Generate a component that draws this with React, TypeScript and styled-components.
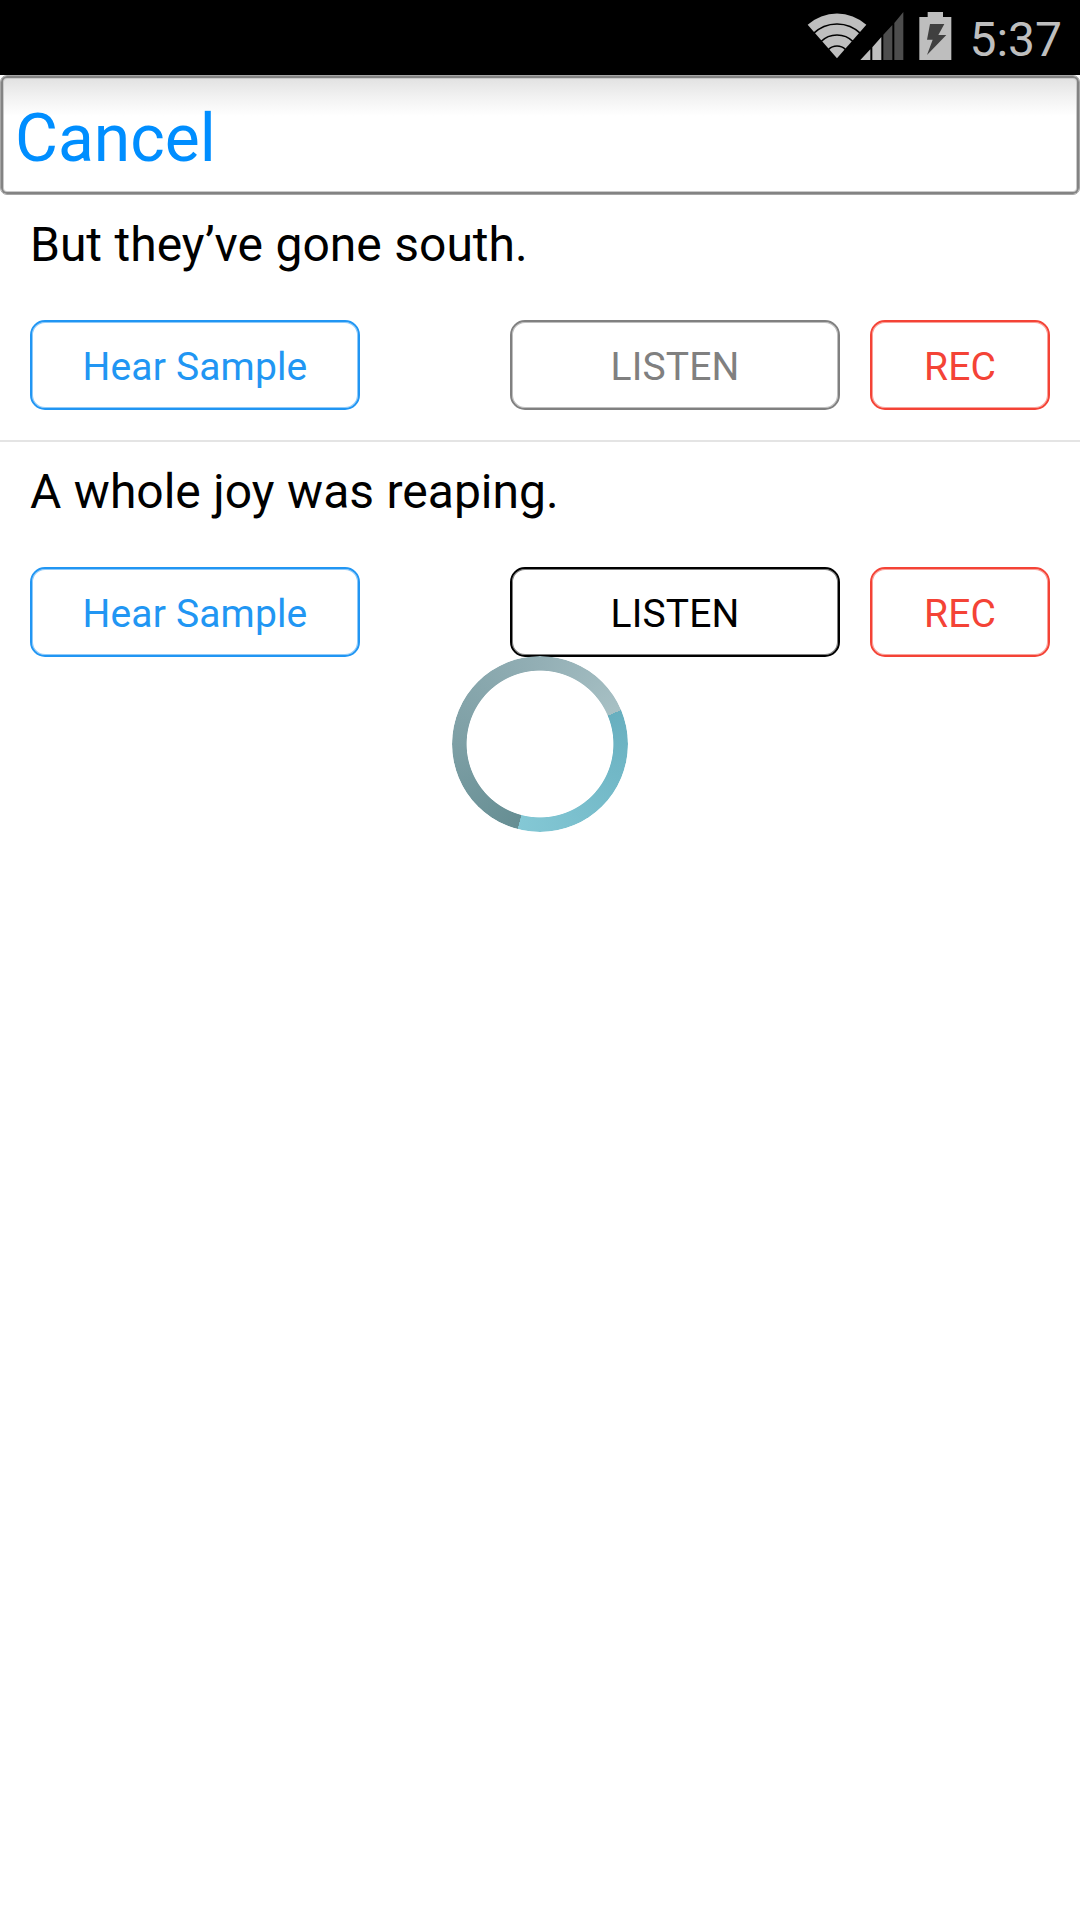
import React from 'react';
import styled, { createGlobalStyle } from 'styled-components';

const GlobalStyle = createGlobalStyle`
  *, *::before, *::after { box-sizing: border-box; }
  html, body { margin: 0; padding: 0; background: #fff; }
  button { font: inherit; }
`;

const Screen = styled.div`
  position: relative;
  display: flex;
  flex-direction: column;
  width: 1080px;
  height: 1920px;
  overflow: hidden;
  background: #fff;
  font-family: Roboto, 'Noto Sans', sans-serif;
  color: #000;
`;

const StatusBar = styled.header`
  display: flex;
  flex: none;
  justify-content: flex-end;
  height: 75px;
  padding-right: 18px;
  background: #000;
`;

const StatusIcons = styled.svg`
  display: block;
  flex: none;
  width: 164px;
  height: 75px;
  margin-right: -1px;
`;

const Clock = styled.time`
  font-size: 48px;
  line-height: 80px;
  color: #bebebe;
`;

const NavBar = styled.nav`
  display: flex;
  flex: none;
  align-items: center;
  height: 120px;
  padding: 0 14px;
  border: 1px solid #a6a6a6;
  border-radius: 7px;
  box-shadow: inset 0 0 0 2px #838383, inset 0 0 0 3px #cacaca;
  background: linear-gradient(#e0e0e0 0, #f1f1f1 20px, #fff 40px);
`;

const CancelButton = styled.button`
  padding: 7px 0 0;
  border: 0;
  background: none;
  font-size: 66px;
  line-height: 76px;
  color: #008eff;
`;

const PhraseList = styled.ul`
  margin: 0;
  padding: 0;
  list-style: none;
`;

const PhraseItem = styled.li`
  display: flex;
  flex-direction: column;
  height: 247px;
  padding: 21px 30px 0;

  &:not(:last-child) {
    border-bottom: 2px solid #e4e4e4;
  }
`;

const PhraseText = styled.p`
  margin: 0;
  height: 104px;
  font-size: 48px;
  line-height: 58px;
  word-spacing: 0.6px;
  white-space: nowrap;
`;

const Actions = styled.div`
  display: flex;
  gap: 30px;
`;

const ActionButton = styled.button<{ $color: string; $width: number; $end?: boolean }>`
  width: ${({ $width }) => $width}px;
  height: 90px;
  margin-left: ${({ $end }) => ($end ? 'auto' : '0')};
  padding: 4px 0 0;
  border: 2px solid ${({ $color }) => $color};
  border-radius: 15px;
  box-shadow: inset 0 0 0 1px ${({ $color }) => $color}80;
  background: #fff;
  font-size: 39px;
  line-height: 46px;
  letter-spacing: 0.15px;
  color: ${({ $color }) => $color};
`;

const Spinner = styled.div`
  position: absolute;
  top: 656px;
  left: 452px;
  width: 176px;
  height: 176px;
  border-radius: 50%;
  background: conic-gradient(
    from 67.3deg,
    #68afbf 0deg,
    #84c8d5 127.3deg,
    #668e93 127.5deg,
    #7d9fa5 203deg,
    #93afb5 293deg,
    #a7c0c4 360deg
  );
  mask: radial-gradient(circle closest-side, transparent 73px, #000 73.8px);
`;

const phrases = [
  { text: 'But they’ve gone south.', listenColor: '#808080' },
  { text: 'A whole joy was reaping.', listenColor: '#000000' },
];

export default function App() {
  return (
    <Screen>
      <GlobalStyle />
      <StatusBar>
        <StatusIcons viewBox="0 0 492 225" aria-hidden="true">
          <path fill="#bebebe" d="M93 175 L5 74 A133 133 0 0 1 181 74 Z" />
          <g fill="none" stroke="#000" strokeWidth="5">
            <circle cx="93" cy="174" r="102" />
            <circle cx="93" cy="174" r="69" />
            <circle cx="93" cy="174" r="36" />
          </g>
          <path fill="#bebebe" d="M163 180 L193 148 V180 Z M199 142 L226 111 V180 H199 Z" />
          <path fill="#4d4d4d" d="M232 104 L259 75 V180 H232 Z M265 69 L292 36 V180 H265 Z" />
          <path fill="#bebebe" d="M340 51 H365 V36 H411 V51 H436 V180 H340 Z" />
          <path fill="#404040" d="M372 72 H415 L397 105 H421 L363 165 L380 119 H363 Z" />
        </StatusIcons>
        <Clock>5:37</Clock>
      </StatusBar>
      <NavBar>
        <CancelButton>Cancel</CancelButton>
      </NavBar>
      <PhraseList>
        {phrases.map(({ text, listenColor }) => (
          <PhraseItem key={text}>
            <PhraseText>{text}</PhraseText>
            <Actions>
              <ActionButton $color="#2196f3" $width={330}>Hear Sample</ActionButton>
              <ActionButton $color={listenColor} $width={330} $end>LISTEN</ActionButton>
              <ActionButton $color="#f44336" $width={180}>REC</ActionButton>
            </Actions>
          </PhraseItem>
        ))}
      </PhraseList>
      <Spinner role="progressbar" />
    </Screen>
  );
}
